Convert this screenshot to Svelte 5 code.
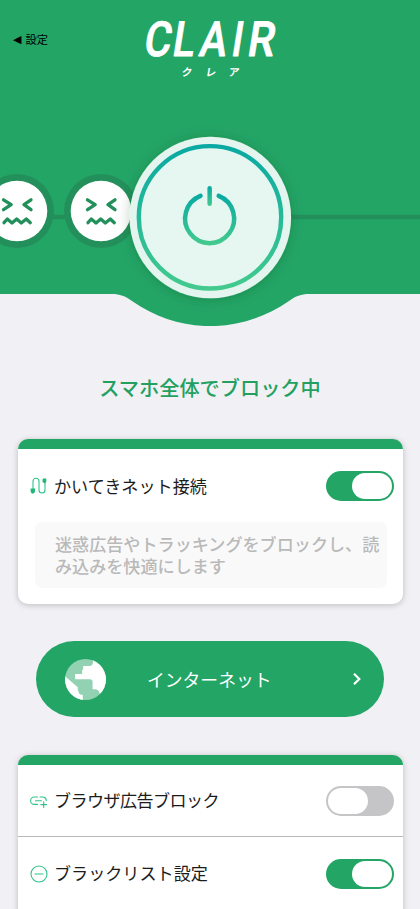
<script lang="ts">
  let vpn = $state(true);
  let settings = $state([
    { icon: 'link', label: 'ブラウザ広告ブロック', on: false },
    { icon: 'minus', label: 'ブラックリスト設定', on: true }
  ]);
  const faces = [17, 101];
  const wordmark = [
    { char: 'C', x: 7.5, width: 27 },
    { char: 'L', x: 36, width: 22 },
    { char: 'A', x: 63, width: 27 },
    { char: 'I', x: 95, width: 11 },
    { char: 'R', x: 111, width: 27 }
  ];
</script>

{#snippet toggle(on: boolean, label: string, flip: () => void)}
  <button class="toggle" class:on role="switch" aria-checked={on} aria-label={label} onclick={flip}>
    <span class="knob"></span>
  </button>
{/snippet}

<main class="screen">
  <header>
    <div class="top">
      <a href="#settings" class="back"><span class="arrow">◀</span>設定</a>
      <svg class="logo" width="150" height="72" viewBox="0 0 150 72">
        <g class="wordmark" transform="translate(0 45.5) skewX(-9)">
          {#each wordmark as { char, x, width }}
            <text {x} y="0" textLength={width} lengthAdjust="spacingAndGlyphs">{char}</text>
          {/each}
        </g>
        <g class="kana" transform="translate(0 66) skewX(-10)">
          <text x="46" y="0">ク</text>
          <text x="70" y="0">レ</text>
          <text x="93" y="0">ア</text>
        </g>
      </svg>
    </div>

    <svg class="hero" width="420" height="226" viewBox="0 100 420 226">
      <defs>
        <linearGradient id="ring" gradientUnits="userSpaceOnUse" x1="0" y1="144" x2="0" y2="291">
          <stop offset="0" stop-color="#08a9a3" />
          <stop offset="1" stop-color="#44ca8d" />
        </linearGradient>
        <linearGradient id="arc" gradientUnits="userSpaceOnUse" x1="0" y1="194" x2="0" y2="245">
          <stop offset="0" stop-color="#08a9a3" />
          <stop offset="1" stop-color="#44ca8d" />
        </linearGradient>
        <linearGradient id="stem" gradientUnits="userSpaceOnUse" x1="0" y1="186" x2="0" y2="206">
          <stop offset="0" stop-color="#08a9a3" />
          <stop offset="1" stop-color="#44ca8d" />
        </linearGradient>
        <filter id="shadow" x="-20%" y="-20%" width="140%" height="140%">
          <feDropShadow dx="0" dy="1" stdDeviation="6" flood-color="#0b3b25" flood-opacity=".25" />
        </filter>
      </defs>

      <path fill="#23a566" d="M0 100H420V294H309C301 294 296 296 289 301C240 334.500 180 334.500 132 301C125 296 120 294 112 294H0Z" />
      <path d="M0 217H420" stroke="#23905b" stroke-width="4.500" />

      {#each faces as x}
        <g transform="translate({x} 211)">
          <circle r="37" fill="#23905b" />
          <circle r="30.300" fill="#fff" />
          <path class="face" d="M-13.500-11.200L-5.800-6.300L-13.500-1.300M14-11.200L7-6.300L14-1.300" />
          <path class="face" d="M-13 11.700L-9.700 8L-5 12L-.3 8L4.300 12L9.300 8L13.300 11.700" />
        </g>
      {/each}

      <circle cx="210.300" cy="217.500" r="80.800" fill="#e3f5ee" filter="url(#shadow)" />
      <circle cx="210" cy="217.300" r="71.200" fill="#e6f7f1" stroke="url(#ring)" stroke-width="4.400" />
      <path class="power" stroke="url(#arc)" d="M200.500 195.900A24.500 24.500 0 1 0 218.700 195.900" />
      <rect x="207.400" y="186" width="4.500" height="20" rx="2.250" fill="url(#stem)" />
    </svg>
  </header>

  <h1>スマホ全体でブロック中</h1>

  <section class="card vpn">
    <div class="row">
      <svg class="icon" width="18" height="18" viewBox="0 0 18 18">
        <path d="M3 12V4.200A3 3 0 0 1 9 4.200V13A3 3 0 0 0 15 13V6" />
        <path class="plug" d="M.6 11.500H5V14.500L3.800 16.500H1.800L.6 14.500ZM12.500 2.300L13.200 1.500H16.300V5L15 6.200H14L12.500 4.700Z" />
      </svg>
      <h2>かいてきネット接続</h2>
      {@render toggle(vpn, 'かいてきネット接続', () => (vpn = !vpn))}
    </div>
    <p>迷惑広告やトラッキングをブロックし、読み込みを快適にします</p>
  </section>

  <button class="network">
    <svg class="globe" width="41" height="41" viewBox="135 87 122 122">
      <clipPath id="disc"><circle cx="196" cy="148" r="61" /></clipPath>
      <g clip-path="url(#disc)">
        <path fill="#92d2b2" d="M135 87H257V209H135Z" />
        <path fill="#fff" d="M218 80V99Q216 108 208 108H189V119H186V132H165V147H209Q217 147 217 155V177H226Q236 178 238 190L260 190V80ZM130 134L173 171V178L177 190Q180 194 188 194V212H130Z" />
      </g>
    </svg>
    <span>インターネット</span>
    <svg class="chevron" width="10" height="14" viewBox="0 0 10 14"><path d="M2 1.800L7.300 7L2 12.200" /></svg>
  </button>

  <section class="card list">
    {#each settings as item}
      <div class="row line">
        <svg class="icon" width="18" height="18" viewBox="0 0 18 18">
          {#if item.icon === 'link'}
            <path d="M7.500 5H4.300A3.700 3.700 0 0 0 4.300 12.400H7.500M10 5H12.600A3.600 3.600 0 0 1 16.300 8.500M5.500 8.700H11.500M13.700 9.700V15.500M10.800 12.600H16.600" />
          {:else}
            <circle cx="9" cy="9" r="8" />
            <path d="M5 9H13" />
          {/if}
        </svg>
        <h2 class:tight={item.icon === 'link'}>{item.label}</h2>
        {@render toggle(item.on, item.label, () => (item.on = !item.on))}
      </div>
    {/each}
  </section>
</main>

<style>
  :global(body) { background: #f0f0f5; overflow: hidden; }

  .screen {
    width: 420px;
    height: 909px;
    overflow: hidden;
    font-family: "Liberation Sans", "Noto Sans CJK JP", sans-serif;
    color: #1c1c1c;
  }
  button { border: 0; padding: 0; font: inherit; cursor: pointer; }
  h1, h2, p { margin: 0; }

  .top { height: 100px; background: #23a566; display: flex; align-items: flex-start; }
  .back { width: 122px; padding: 33px 0 0 13px; font-size: 11.300px; line-height: 15px; color: #000; text-decoration: none; display: flex; gap: 4px; }
  .arrow { font-family: "DejaVu Sans", sans-serif; font-size: 11px; line-height: 13px; }
  .logo { margin-top: 10px; fill: #fff; }
  .wordmark { font-family: Roboto, sans-serif; font-size: 48.500px; font-weight: 500; stroke: #fff; stroke-width: .8px; stroke-linejoin: round; }
  .kana { font-family: "Noto Sans CJK JP", sans-serif; font-size: 10.500px; font-weight: 700; }

  .hero { display: block; }
  .face { fill: none; stroke: #23905b; stroke-width: 3.300px; stroke-linecap: round; stroke-linejoin: round; }
  .power { fill: none; stroke-width: 4.500px; stroke-linecap: round; }

  h1 { margin: 48px 0 34px; text-align: center; font-size: 20.200px; line-height: 31px; font-weight: 500; color: #23a05f; }

  .card {
    margin: 0 17.500px;
    background: #fff;
    border-radius: 10px;
    overflow: hidden;
    box-shadow: 0 1px 6px rgba(0, 0, 0, .22);
  }
  .card::before { content: ''; display: block; height: 10px; background: #23a566; }
  .vpn { height: 165px; }
  .list { height: 230px; }

  .row { height: 73px; padding: 0 8.500px 0 12px; display: flex; align-items: center; }
  .row.line:first-child { height: 71px; }
  .row.line + .row.line { border-top: 1px solid #b8b8ba; }
  .icon { flex: none; fill: none; stroke: #2cc38a; stroke-width: 1.100px; stroke-linecap: round; }
  .plug { fill: #20b779; stroke: none; }
  h2 { flex: 1; margin-left: 6.500px; padding-top: 3px; font-size: 17.100px; font-weight: 400; line-height: 26px; }
  .vpn h2 { padding-top: 4px; }
  .tight { letter-spacing: -.6px; }

  .toggle { width: 68px; height: 30px; padding: 2px; border-radius: 15px; background: #c5c5c7; display: flex; }
  .toggle.on { background: #23a566; justify-content: flex-end; }
  .knob { width: 40px; height: 26px; border-radius: 13px; background: #fff; }

  .card p { margin: 0 15.500px 0 17px; height: 53px; padding: 13px 0 0 20.500px; border-radius: 7px; background: #f9f9f9; color: #b9b9b9; font-size: 17.100px; font-weight: 500; line-height: 22px; }

  .network { display: flex; align-items: center; width: 348px; height: 76px; margin: 37px 36px 38px; padding: 0 22px 0 28.500px; border-radius: 38px; background: #23a566; color: #fff; }
  .network span { flex: 1; padding-left: 41.500px; text-align: left; font-size: 17.800px; font-weight: 400; }
  .chevron { fill: none; stroke: #fff; stroke-width: 2.200px; }
</style>
